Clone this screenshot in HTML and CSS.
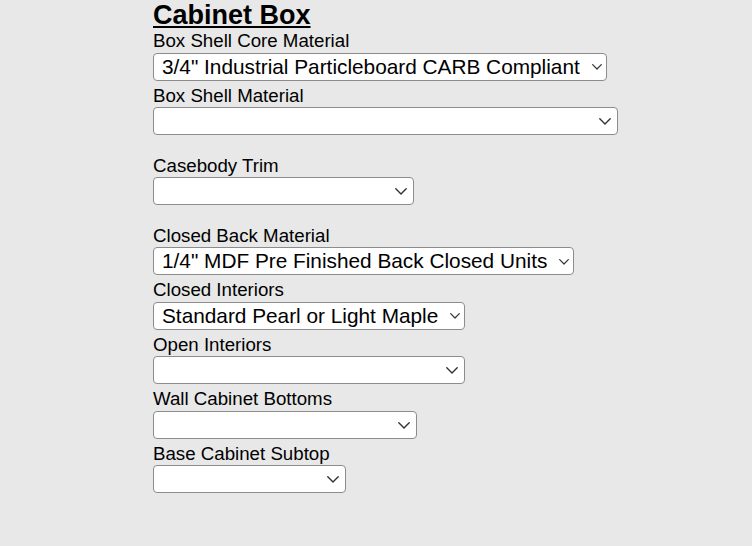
FILE: index.html
```html
<!DOCTYPE html>
<html lang="en">
<head>
<meta charset="utf-8">
<title>Cabinet Box</title>
<link rel="stylesheet" href="styles.css">
</head>
<body>
<main class="form">
  <h2 class="title">Cabinet Box</h2>

  <div class="field">
    <label class="label" for="f1">Box Shell Core Material</label>
    <span class="select-wrap w-core">
      <select id="f1" class="select"><option>3/4" Industrial Particleboard CARB Compliant</option></select>
      <svg class="chev chev-sm" viewBox="0 0 10 6"><path d="M0.7 0.7 L5 5 L9.3 0.7" /></svg>
    </span>
  </div>

  <div class="field">
    <label class="label" for="f2">Box Shell Material</label>
    <span class="select-wrap w-shell">
      <select id="f2" class="select"><option></option></select>
      <svg class="chev" viewBox="0 0 12 7"><path d="M0.8 0.8 L6 6 L11.2 0.8" /></svg>
    </span>
  </div>

  <div class="field spaced">
    <label class="label" for="f3">Casebody Trim</label>
    <span class="select-wrap w-trim">
      <select id="f3" class="select"><option></option></select>
      <svg class="chev" viewBox="0 0 12 7"><path d="M0.8 0.8 L6 6 L11.2 0.8" /></svg>
    </span>
  </div>

  <div class="field spaced">
    <label class="label" for="f4">Closed Back Material</label>
    <span class="select-wrap w-back">
      <select id="f4" class="select"><option>1/4" MDF Pre Finished Back Closed Units</option></select>
      <svg class="chev chev-sm" viewBox="0 0 10 6"><path d="M0.7 0.7 L5 5 L9.3 0.7" /></svg>
    </span>
  </div>

  <div class="field">
    <label class="label" for="f5">Closed Interiors</label>
    <span class="select-wrap w-int">
      <select id="f5" class="select"><option>Standard Pearl or Light Maple</option></select>
      <svg class="chev chev-sm" viewBox="0 0 10 6"><path d="M0.7 0.7 L5 5 L9.3 0.7" /></svg>
    </span>
  </div>

  <div class="field">
    <label class="label" for="f6">Open Interiors</label>
    <span class="select-wrap w-int">
      <select id="f6" class="select"><option></option></select>
      <svg class="chev" viewBox="0 0 12 7"><path d="M0.8 0.8 L6 6 L11.2 0.8" /></svg>
    </span>
  </div>

  <div class="field">
    <label class="label" for="f7">Wall Cabinet Bottoms</label>
    <span class="select-wrap w-wall">
      <select id="f7" class="select"><option></option></select>
      <svg class="chev" viewBox="0 0 12 7"><path d="M0.8 0.8 L6 6 L11.2 0.8" /></svg>
    </span>
  </div>

  <div class="field">
    <label class="label" for="f8">Base Cabinet Subtop</label>
    <span class="select-wrap w-sub">
      <select id="f8" class="select"><option></option></select>
      <svg class="chev" viewBox="0 0 12 7"><path d="M0.8 0.8 L6 6 L11.2 0.8" /></svg>
    </span>
  </div>
</main>
</body>
</html>
```

FILE: styles.css
```css
html, body {
  margin: 0;
  padding: 0;
  background: #e8e8e8;
}

body {
  font-family: "Liberation Sans", Arial, sans-serif;
  color: #000;
}

.form {
  display: flex;
  flex-direction: column;
  align-items: flex-start;
  padding-left: 153px;
}

.title {
  margin: 0;
  font-size: 27px;
  font-weight: bold;
  line-height: 30px;
  text-decoration: underline;
  text-underline-offset: 2px;
  text-decoration-thickness: 2px;
}

.field {
  display: flex;
  flex-direction: column;
  align-items: flex-start;
}

.field.spaced {
  margin-top: 15.5px;
}

.label {
  display: block;
  font-size: 18.7px;
  line-height: 21.5px;
}

.select-wrap {
  position: relative;
  display: block;
  height: 28px;
  margin: 1px 0 4px;
}

.select {
  -webkit-appearance: none;
  appearance: none;
  box-sizing: border-box;
  width: 100%;
  height: 28px;
  margin: 0;
  padding: 0 24px 0 8px;
  border: 1px solid #8c8c8c;
  border-radius: 4px;
  background: #fff;
  color: #000;
  font-family: "Liberation Sans", Arial, sans-serif;
  font-size: 20.8px;
  line-height: 26px;
  outline: none;
}

.chev {
  position: absolute;
  right: 7px;
  top: 11px;
  width: 12px;
  height: 7px;
  pointer-events: none;
}

.chev path {
  fill: none;
  stroke: #333;
  stroke-width: 1.4;
  stroke-linecap: round;
  stroke-linejoin: round;
}

.chev-sm {
  right: 5px;
  top: 11.5px;
  width: 10px;
  height: 6px;
}

.chev-sm path {
  stroke-width: 1.2;
}

.w-core { width: 454px; }
.w-shell { width: 465px; }
.w-trim { width: 261px; }
.w-back { width: 421px; }
.w-int { width: 312px; }
.w-wall { width: 264px; }
.w-sub { width: 193px; }
```
